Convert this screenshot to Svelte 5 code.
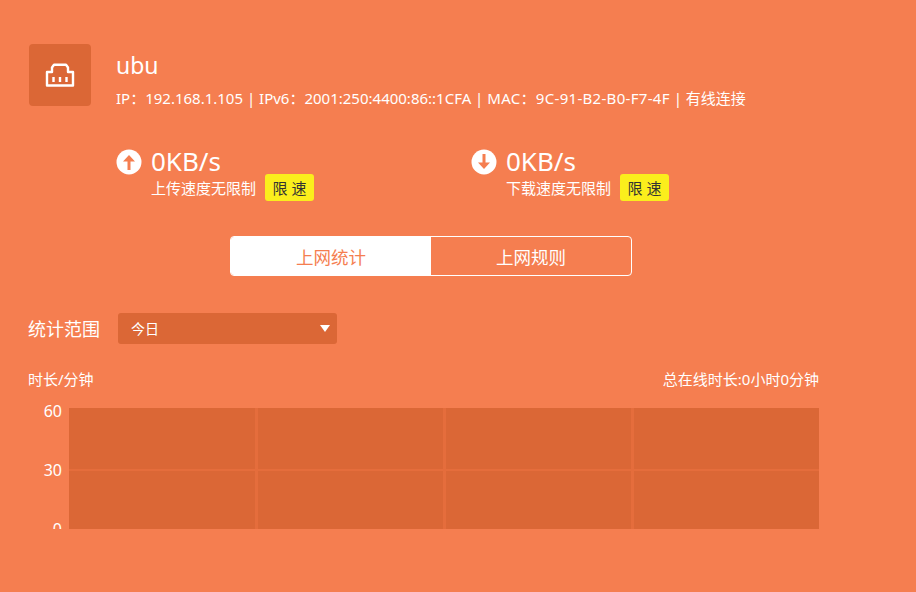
<script>
  let speeds = [
    { dir: 'up', label: '上传速度无限制' },
    { dir: 'down', label: '下载速度无限制' }
  ]
  let ticks = ['60', '30', '0']
</script>

<div class="page">
  <div class="device">
    <div class="avatar">
      <svg width="30" height="26" viewBox="0 0 30 26" fill="none" stroke="#fff" stroke-width="2.400" stroke-linejoin="round">
        <path d="M2 23.500V10H7V5.500L9 2.800H21L23 5.500V10H28V23.500Z" />
        <path d="M8.500 15V20M15 15V20M21.500 15V20" />
      </svg>
    </div>
    <div class="info">
      <div class="name">ubu</div>
      <div class="meta">IP：192.168.1.105 | IPv6：2001:250:4400:86::1CFA | <span class="mac">MAC：9C-91-B2-B0-F7-4F</span> | 有线连接</div>
    </div>
  </div>

  <div class="speeds">
    {#each speeds as s}
      <div class="speed">
        <svg class="arrow" width="26" height="26" viewBox="0 0 26 26">
          <circle cx="13" cy="13" r="12.500" fill="#fff" />
          <path
            d={s.dir === 'up'
              ? 'M13 6L19 12.500H14.500V21H11.500V12.500H7Z'
              : 'M13 20L19 13.500H14.500V5H11.500V13.500H7Z'}
            fill="#f57e50"
          />
        </svg>
        <div class="speed-text">
          <div class="value">0KB/s</div>
          <div class="limit">
            <span>{s.label}</span>
            <button class="limit-btn">限 速</button>
          </div>
        </div>
      </div>
    {/each}
  </div>

  <div class="tabs">
    <div class="tab active">上网统计</div>
    <div class="tab">上网规则</div>
  </div>

  <div class="range">
    <span class="range-label">统计范围</span>
    <div class="select">
      <span class="select-text">今日</span>
      <i class="caret"></i>
    </div>
  </div>

  <div class="chart-head">
    <span>时长/分钟</span>
    <span>总在线时长:0小时0分钟</span>
  </div>

  <div class="chart">
    <div class="ticks">
      {#each ticks as t}
        <span>{t}</span>
      {/each}
    </div>
    <div class="plot">
      {#each Array(8) as _}
        <div class="cell"></div>
      {/each}
    </div>
  </div>
</div>

<style>
  :global(body) {
    margin: 0;
    background: #f57e50;
    overflow: hidden;
  }

  .page {
    width: 916px;
    height: 592px;
    box-sizing: border-box;
    padding: 44px 97px 0 29px;
    background: #f57e50;
    color: #fff;
    font-family: "Noto Sans", "Noto Sans CJK SC", sans-serif;
  }

  .device {
    display: flex;
    gap: 25px;
  }

  .avatar {
    width: 62px;
    height: 62px;
    border-radius: 4px;
    background: #db6736;
    display: flex;
    align-items: center;
    justify-content: center;
  }

  .name {
    font-size: 23px;
    line-height: 32px;
    margin-top: 5px;
  }

  .meta {
    font-size: 15px;
    line-height: 20px;
    margin-top: 7px;
    white-space: nowrap;
  }

  .mac {
    letter-spacing: 0.300px;
  }

  .speeds {
    display: flex;
    margin: 40px 0 0 87px;
  }

  .speed {
    flex: none;
    width: 355px;
    display: flex;
    gap: 9px;
  }

  .arrow {
    margin-top: 1px;
  }

  .value {
    font-size: 26px;
    line-height: 26px;
  }

  .limit {
    display: flex;
    align-items: center;
    gap: 9px;
    font-size: 15px;
  }

  .limit-btn {
    width: 49px;
    height: 27px;
    padding: 0;
    border: 0;
    border-radius: 3px;
    background: #fbee1c;
    color: #333;
    font: inherit;
  }

  .tabs {
    display: flex;
    width: 402px;
    height: 40px;
    margin: 35px 0 0 201px;
    box-sizing: border-box;
    border: 1px solid #fff;
    border-radius: 4px;
    overflow: hidden;
  }

  .tab {
    flex: 1;
    display: flex;
    align-items: center;
    justify-content: center;
    font-size: 17.500px;
  }

  .active {
    background: #fff;
    color: #f57e50;
  }

  .range {
    display: flex;
    align-items: center;
    gap: 17px;
    margin-top: 37px;
  }

  .range-label {
    font-size: 18px;
    margin-left: -1px;
    margin-right: 1px;
    padding-bottom: 2px;
  }

  .select {
    width: 219px;
    height: 31px;
    box-sizing: border-box;
    padding: 0 7px 0 13px;
    border-radius: 3px;
    background: #db6736;
    display: flex;
    align-items: center;
    justify-content: space-between;
    font-size: 14px;
  }

  .select-text {
    padding-bottom: 2px;
  }

  .caret {
    border: 5.500px solid transparent;
    border-top: 7px solid #fff;
    border-bottom: 0;
  }

  .chart-head {
    display: flex;
    justify-content: space-between;
    font-size: 15px;
    line-height: 20px;
    margin-top: 25px;
    margin-left: -1px;
  }

  .chart {
    display: flex;
    gap: 7px;
    height: 125px;
    margin-top: 15px;
    overflow: hidden;
  }

  .ticks {
    width: 33px;
    display: flex;
    flex-direction: column;
    align-items: flex-end;
    gap: 45px;
    font-size: 16px;
    line-height: 14px;
  }

  .plot {
    flex: 1;
    display: grid;
    grid-template-columns: 186px 185px 185px 1fr;
    grid-template-rows: 61px 1fr;
    gap: 2px 3px;
    margin-top: 4px;
    background: #e56d3c;
  }

  .cell {
    background: #db6736;
  }
</style>
